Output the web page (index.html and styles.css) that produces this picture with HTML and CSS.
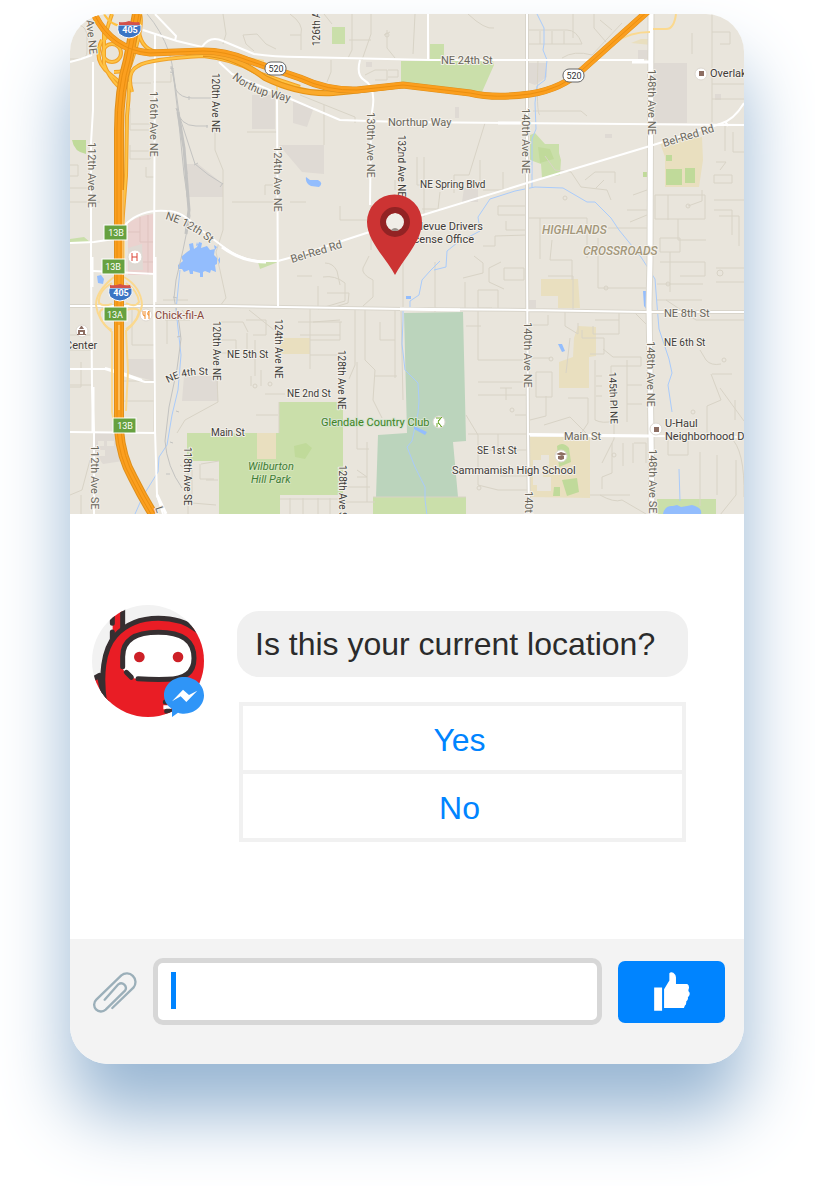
FILE: index.html
```html
<!DOCTYPE html>
<html lang="en">
<head>
<meta charset="utf-8">
<meta name="viewport" content="width=device-width, initial-scale=1">
<title>Location chat</title>
<link rel="stylesheet" href="styles.css">
</head>
<body>
<main class="card">
<svg class="map" viewBox="70 14 674 500" role="img" aria-label="Street map">
  <rect class="land" x="70" y="14" width="674" height="500"/>

  <g class="block">
    <path d="M252 95h23v34h-23zM293 100l21 7-7 20-14-4zM279 145h45v29l-22-2zM186 164h12l25 20v13h-37zM653 63h34v60h-34zM527 63h20v14l-12 8-8-3zM127 359h27v22l-27-7zM184 376h34v25h-36zM95 433h25l3 28-20 3-8-10zM464 188h14v14h-16zM455 107h4v11h-4zM638 50h12v9h-12zM715 94h6v6h-6zM528 300h8v8h-8zM366 62h6v5h-6zM605 134h7v4h-7z"/>
  </g>
  <path class="hospital" d="M128 223q12-8 25-9v61h-25z"/>
  <path class="block" d="M128 248l14-4 1 26h-14z"/>
  <path class="hospital-street" d="M140 217v25h13M148 215v60M128 232h12M143 262h10"/>
  <g class="park">
    <path d="M401 61h92l1 4-12 27-81-10zM430 44h14v15h-14zM332 27h13v17h-13zM70 239l14-2 6 5H70zM258 262h20l-18 7zM530 135l5-2 10 11h14v9l2 7-1 15-18 3-1-14-11-4zM187 433h92v-31h64v93h-63v19h-61v-53h-32zM373 497h93v17h-93zM657 499h59v15h-59z"/>
    <path class="park-dark" d="M72 140h14v14q-12-2-14-14zM538 147l12 2 4 10-14 4zM294 446l12-3 6 5-7 11-10-2zM643 172h4v5h-4z"/>
  </g>
  <g class="school">
    <path d="M660 143l42-6 1 23-4 27h-34v-30zM541 279h37l2 29h-22v-12h-17zM578 326l18 1v29l-7 1v31h-30v-26l14-5 1-19zM530 437h60v61l-60-1zM257 433h19v26h-19zM280 338h30v16h-30zM631 43l10-4h10v6z"/>
  </g>
  <path class="park-dark" d="M666 169h16v16h-16zM685 168h10v15h-10zM666 155h6v6h-6zM557 446q6-5 12 2l2 14-12 5zM562 480l15-2 2 14-12 4zM554 487h6v9h-7z"/>
  <path class="golf" d="M404 313l59-1 3 129-13 1 5 55h-82l2-62 29-2z"/>
  <path class="footprint" d="M533 460h8v-5h8v10h-6v12h8v14h-14v-6h-4zM98 441h6v5h-6zM107 441h7v5h-7zM99 450h6v6h-6z"/>

  <g class="street">
    <path d="M70 59h10q7 0 7-8V37q0-10-8-12M70 176h8v-11H70M70 202h30M70 188h21v16M128 83h23M130 108v22h22M130 145v14h20v-8h-20M131 124h22M146 167v10h8M153 82h18v-8M254 51l-8-7-3-9 14-1 9 10 10 5M223 14l3 20-3 10M215 132v18l8 20v60l-7 22 10 46-6 8M247 132h30M265 195v-10h13M232 202h46"/>
    <path d="M290 14q14 10 11 20v16M301 35h-11M352 14v36l-4 8M371 14v20l-9 26M349 40h22M387 30v18l8 10M384 35l6-3M415 14l-2 40M331 60v12l-4 10M365 75l10-5h12v10h-12M388 70h10v7h-10M324 14l8 10M468 14q17 16 26 14M324 105v40M300 95l55 22v6M485 123l-16 52h-15v18M424 157v60M417 157v28h7M480 160v28M440 192l-2 17h-16M340 206v14h32M290 202h16M503 172v18h-20M527 235l-32 1v10h-12M498 206h30M498 206v9h29M506 221v9h22M474 256l9 7v10l-20 5M501 262l-12 6v14l15 7M504 268h20v12h-20zM478 290h20v18M478 290v18h14M371 205v45M395 180v10"/>
    <path d="M527 30h40q10 0 15 14h-55M540 31v13M552 31v13M564 31v13M538 60q-2 55 2 55M573 14v24M594 14v14l12 14M600 20l12 10M562 58q12-8 30-3l30-32M533 111h48l6 5M712 14v108M712 32h18v12h-10M692 33v21M712 84h32M712 99h32M545 156l10 14 16 2 10 15 26 3 4 10M585 180l10-8h20v11M596 188l8-8M627 210h20M633 195l14-5M630 222l17-7M540 218v41M527 218h60v40M588 228h61M552 240l-2 20h22v20M548 276h25v34M598 238v50h50M655 195h50v24h-50zM668 195v25M678 219v21h28M688 206l14-5v-11M725 125v26M733 132v20h11M716 162h10l-6 8M714 175h18v8h-18zM714 200h30M714 210h18v25M719 216h20v30M660 238h20v14h-20zM660 262h45v14h-25M716 268h28M716 282h28M657 284h46M657 300h45"/>
    <path d="M548 315v10h-20M565 312v14l13 8v-11M595 320h24v14h-26v-8M619 320v-10M634 312l12 12M570 338l-4 35M582 330v8h22v16h-14M536 372h16v25h-16zM550 358h-18M603 349l10 8h28v9h-30v40M595 360v60q8 4 18 1M596 376h6M596 386h6M596 396h6M568 398h20v25l-10 15M544 425l26-8 16 16M530 420l16-4v-20M627 360v62M627 385h15M627 404h15M614 421v18l-12 24M612 443v30l-10 4v12M623 443v23M633 443v20M634 443h12v20M590 495h40M600 495q14 8 22 5l24 14M670 252v40M666 300l30 20h50M700 350l6 10q5 6 15 4M711 374l10 26-14 6v30M712 374h20M720 388l24 33M735 400v20M717 455v40M736 460v35l-16 20M700 452v54M668 440v15h20v-15M730 437q15 12 14 60"/>
    <path d="M327 293h22l-1 10-20 6M318 286v23l27-8v-18q-10-8-22-6M297 276h15M325 263q8 0 12 8l3 14M363 306l10-9V280q-12-6-10-12l6-12M403 262v45M435 262v50M465 282v28M310 309v60M298 322h44M300 335h40M340 322v18h-30M310 355h35M313 322l27-2M365 310v50l10 10-2 30 9 18M395 310v68M380 322v18h15M401 310l2 90M355 310v55l-6 14M375 376h22M357 362v87h12M367 442v60M357 470l10 7h-10M340 502h35M340 487h30M478 360h50M478 382h50M478 360v-50M478 395h50M500 388h12M506 388v12M515 415h13M468 434h60v18M498 434v20M466 415l12 20M478 435v50l20 5h30M482 450h46M528 476h-28M466 326h15M373 497h93"/>
    <path d="M70 335h21M70 350h21M70 385h21M81 362v25h-11M118 381h36v50M118 401h36M132 310v35h22M165 320h25l-8-10M218 340h18v13h-18M218 322h25l5 10M247 333v16M255 340v36M251 376v10M261 370v16M216 352l2 50-33 18-8 13M249 310l30 24M246 320h20v15h-13M265 394h20M279 402v31M256 415h22M192 465v38l24 2M200 464v15h14M206 480h12M70 495l12-5 8-30M81 495v19M180 465l8 6v43M163 300h25M167 314v30M219 461l-18 3M280 499h62M290 498v16M303 498v16M318 498v16M330 498v16"/>
    <circle cx="512" cy="410" r="2"/><circle cx="479" cy="488" r="2"/><circle cx="606" cy="288" r="2"/><circle cx="668" cy="284" r="2"/><circle cx="720" cy="273" r="3"/><circle cx="551" cy="359" r="2"/><circle cx="614" cy="455" r="2"/><circle cx="688" cy="206" r="2"/><circle cx="565" cy="198" r="2"/><circle cx="724" cy="360" r="2"/><circle cx="693" cy="412" r="2"/><circle cx="255" cy="386" r="2"/><circle cx="270" cy="384" r="2"/><circle cx="387" cy="35" r="2"/>
  </g>

  <g class="stream">
    <path d="M537 14l7 14v16l-1 6 4 10-2 20-8 6-2 17 1 26-4 10v48"/>
    <path d="M434 270l12-3 1-16 10-8 23-12-2-14 12-18 25-8 20-4 28 1 24 14h8l16 16 8 12 22 27 14 22 2 26 2 24 10 30 3 14-4 12 4 27"/>
    <path d="M440 261l-10 10-8 9-3 15-9 6v9"/>
    <path d="M403 310v10l-1 24 3 26 13 13 1 18-1 12-6 28-5 6 8 20 10 20v12l3 25"/>
    <path d="M180 270l-4 40 5 45-3 35-6 25-5 30-8 12-1 15-15 24-8 18 4 14M679 469l1 32"/>
  </g>
  <g class="water">
    <path d="M187 252l3-2-1-6 4-1 1 6 3-2 2-5 3 1-1 5 6-2 3 4 5-1-1 6 3 3v6l-2 1 1 7-5-2-1 3-5-2-2 1v5h-3v-4l-7-2v3h-3l-1-4-5 2-2-3h-4v-4l5-4-2-4z"/>
    <path d="M197 242l1 3-2 1zM214 245l3 2-2 3zM218 260l2-3v7zM306 177l4 3h8q6 3 1 7l-8-1q-6-3-5-9zM97 276l4-1 3 4-1 5-5-1zM558 344h4l3 7-3 1zM643 291h4v19l-3-4zM414 426l13 6-2 3-11-6zM406 296h5v3h-5z"/>
    <path d="M663 514q2-9 10-8l4-1 4 2 6-1 5-1q11 3 9 9z"/>
  </g>

  <g class="rail">
    <path d="M147 14q14 16 22 38l3 12 6 50 6 60 6 42-7 34-7 30-2 18 5 25 2 16-4 30-8 38-4 34q2 26 17 47"/>
    <path d="M171 66l5 24q5 8 16 8h26M176 108q4 18 20 18h12M180 118l15 46q12 11 28 20M173 70l10 72 4 32"/>
    <path class="rail-wide" d="M178 112l6 36 5 62-3 24"/>
    <path d="M170 68l4 1M170 72l4 1M189 96v4M207 125v3M194 165l4-2M220 187l3-4M177 298l-4-1M181 336l-4 1M176 411l3 1M170 442l3 1M166 474h4"/>
  </g>

  <g class="road-edge">
    <path d="M70 306h155l178 3 125 1 117 2h99M527 14v246l1 177 1 77"/>
    <path d="M651 14l-1 246-1 45 2 130 1 79" class="avenue-edge"/>
  </g>
  <g class="road">
    <path d="M93 62V110l-2 33v117l1 127 2 45v82M155 35l-1 240 1 155 2 65 6 19M277 97l1 209M360 60q-4 15 4 20 11 6 9 25l-2 15-1 85M428 14v47M143 30l34 11 25 6q8-12 21-6l31 13q20 3 46 3l130 3h214M155 14l21 22-1 5M70 62l11-3 11-4"/>
    <path d="M219 62l13 12 61 26 47 20 60 2 344 3M70 243l24-1 20-3 13-16q15-14 40-12 15 0 30 16l24 18q20 16 40 16h17l22-6 45-15 55-18 127-39 123-37 70-22q14-4 24-21M70 306h155l178 3 125 1 117 2h99M527 14v246l1 177 1 77M93 271l62 3M70 369h35l40 13h10M105 368l15 4 22 8M70 432l85 1M529 434l122 2 93 1M725 121l3 5"/>
    <path class="wide" d="M92 257v30M155 257v45M400 309l60 1M498 123h30M632 62h20M93 387v45M157 495l9 19M530 435l120 1M222 247q20 15 44 15"/>
    <path class="avenue" d="M651 14l-1 246-1 45 2 130 1 79"/>
  </g>

  <g class="ramp-pale">
    <path d="M124 200v75M114 277q-18 14-18 28 2 16 16 27v80l4 20M124 277q17 10 18 28-2 14-16 26l2 40-2 40"/>
    <path d="M112 283q-14 8-13 20 4 4 13 1M126 283q12 8 13 19-4 6-13 1M112 310q-14-4-12 6 3 10 12 14M126 310q16-4 12 5-2 8-12 14"/>
    <path d="M644 14q-35 34-60 53M650 32q-20 0-34 10l-36 30M653 29h13q8 0 10-15M277 82v12M240 57l24 4"/>
  </g>
  <g class="ramp-edge">
    <path d="M104 32v32q4 12 16 24v40M102 40q-10 20 8 34l14 12M140 14q-6 32 16 38M112 14q-8 22-6 26M132 92q-6-20 6-26 10-7 65-10 30 3 52 16l45 15M114 72q12 0 16-6 14-40 10-52M129 82q0 18-2 34l-1 60-4 50"/>
    <circle cx="112" cy="53" r="9"/>
  </g>
  <g class="ramp">
    <path d="M104 32v32q4 12 16 24v40M102 40q-10 20 8 34l14 12M140 14q-6 32 16 38M112 14q-8 22-6 26M132 92q-6-20 6-26 10-7 65-10 30 3 52 16l45 15M114 72q12 0 16-6 14-40 10-52M129 82q0 18-2 34l-1 60-4 50M104 14q8 14 24 12"/>
    <circle cx="112" cy="53" r="9"/>
  </g>
  <path class="branch-edge" d="M203 54q30 0 62 24 35 17 68 15 30-3 70-8"/>
  <path class="branch" d="M203 54q30 0 62 24 35 17 68 15 30-3 70-8"/>
  <g class="freeway-edge">
    <path class="trunk" d="M137 14l-9 46q-9 30-9 70v300q2 27 14 48 10 20 20 36"/>
    <path d="M94 14q18 36 56 39l53-2q22 0 44 9l53 18q28 13 57 12l46-5 67 8q25 6 60 1 32-5 52-24l66-59"/>
  </g>
  <g class="freeway">
    <path class="trunk" d="M137 14l-9 46q-9 30-9 70v300q2 27 14 48 10 20 20 36"/>
    <path d="M94 14q18 36 56 39l53-2q22 0 44 9l53 18q28 13 57 12l46-5 67 8q25 6 60 1 32-5 52-24l66-59"/>
  </g>
  <g class="freeway-line">
    <path d="M135 14l-9 46q-9 30-9 70v300q2 27 14 48 10 20 20 36M139 14l-9 46q-9 30-9 70v300q2 27 14 48 10 20 20 36"/>
    <path d="M94 14q18 36 56 39l53-2q22 0 44 9l53 18q28 13 57 12l46-5 67 8q25 6 60 1 32-5 52-24l66-59"/>
  </g>
  <path class="median" d="M123 190v85M119 325v85"/>

  <g class="exit">
    <rect x="104" y="225" width="23" height="15"/><text x="116" y="236">13B</text>
    <rect x="102" y="259" width="23" height="15"/><text x="113" y="270">13B</text>
    <rect x="104" y="307" width="23" height="14"/><text x="115" y="318">13A</text>
    <rect x="113" y="418" width="23" height="15"/><text x="125" y="429">13B</text>
  </g>
  <g class="interstate">
    <path class="shield" d="M118 25h23q1 6-2 9-5 4-10 4-5 0-10-4-2-4-1-9z"/><path class="crown" d="M119 25v-3q5 1 10-1 5 2 10 1l1 3z"/><text x="130" y="33">405</text>
    <path class="shield" d="M109 288h23q1 6-2 9-5 4-10 4-5 0-10-4-2-4-1-9z"/><path class="crown" d="M110 288v-3q5 1 10-1 5 2 10 1l1 3z"/><text x="121" y="296">405</text>
  </g>
  <g class="state-route">
    <rect x="265" y="62" width="21" height="13" rx="6"/><text x="276" y="72">520</text>
    <rect x="563" y="69" width="21" height="13" rx="6"/><text x="574" y="79">520</text>
  </g>

  <defs>
    <path id="northup" d="M232 78Q252 96 292 102"/>
    <path id="twelfth" d="M165 219Q190 226 216 248"/>
    <path id="fourth" d="M168 383Q185 373 213 375"/>
  </defs>
  <g class="label major">
    <text transform="translate(86 20) rotate(84)">Ave NE</text>
    <text transform="translate(88 142) rotate(90)">112th Ave NE</text>
    <text transform="translate(150 91) rotate(90)">116th Ave NE</text>
    <text transform="translate(274 146) rotate(90)">124th Ave NE</text>
    <text transform="translate(367 112) rotate(90)">130th Ave NE</text>
    <text transform="translate(522 108) rotate(90)">140th Ave NE</text>
    <text transform="translate(648 69) rotate(90)">148th Ave NE</text>
    <text transform="translate(524 322) rotate(90)">140th Ave NE</text>
    <text transform="translate(647 341) rotate(90)">148th Ave NE</text>
    <text transform="translate(91 445) rotate(90)">112th Ave SE</text>
    <text transform="translate(649 449) rotate(90)">148th Ave SE</text>
    <text transform="translate(525 491) rotate(90)">140th</text>
    <text transform="translate(155 508) rotate(70)">L</text>
    <text x="441" y="64">NE 24th St</text>
    <text x="388" y="126">Northup Way</text>
    <text x="664" y="317">NE 8th St</text>
    <text x="564" y="440">Main St</text>
    <text transform="translate(292 263) rotate(-17)">Bel-Red Rd</text>
    <text transform="translate(664 147) rotate(-17)">Bel-Red Rd</text>
    <text><textPath href="#northup">Northup Way</textPath></text>
    <text><textPath href="#twelfth">NE 12th St</textPath></text>
  </g>
  <g class="label minor">
    <text transform="translate(212 73) rotate(90)">120th Ave NE</text>
    <text transform="translate(320 46) rotate(-90)">126th A</text>
    <text transform="translate(398 135) rotate(90)">132nd Ave NE</text>
    <text transform="translate(213 321) rotate(90)">120th Ave NE</text>
    <text transform="translate(275 319) rotate(90)">124th Ave NE</text>
    <text transform="translate(338 350) rotate(90)">128th Ave NE</text>
    <text transform="translate(609 372) rotate(88)">145th Pl NE</text>
    <text transform="translate(184 447) rotate(90)">118th Ave SE</text>
    <text transform="translate(339 465) rotate(90)">128th Ave S</text>
    <text x="420" y="188">NE Spring Blvd</text>
    <text x="227" y="358">NE 5th St</text>
    <text x="287" y="397">NE 2nd St</text>
    <text x="211" y="436">Main St</text>
    <text x="664" y="346">NE 6th St</text>
    <text x="477" y="454">SE 1st St</text>
    <text><textPath href="#fourth">NE 4th St</textPath></text>
  </g>
  <g class="label district">
    <text x="542" y="234">HIGHLANDS</text>
    <text x="583" y="255">CROSSROADS</text>
  </g>
  <g class="label place">
    <text x="710" y="77">Overlak</text>
    <text x="405" y="230">Bellevue Drivers</text>
    <text x="405" y="243">License Office</text>
    <text x="65" y="349">Center</text>
    <text x="665" y="427">U-Haul</text>
    <text x="665" y="440">Neighborhood D</text>
    <text x="452" y="474">Sammamish High School</text>
    <text class="food" x="155" y="319">Chick-fil-A</text>
    <text class="club" x="321" y="426">Glendale Country Club</text>
    <text class="wood" x="248" y="470">Wilburton</text>
    <text class="wood" x="251" y="483">Hill Park</text>
  </g>

  <g class="poi">
    <circle cx="701" cy="74" r="6"/><circle cx="656" cy="429" r="6"/><circle cx="82" cy="331" r="6"/><circle cx="135" cy="257" r="7"/><circle cx="146" cy="315" r="6"/><circle cx="439" cy="422" r="6"/><circle cx="561" cy="456" r="6"/>
  </g>
  <path class="poi-brown" d="M699 71h5v5h-5zM654 427h5v5h-5zM77 335v-1h9v1zM78 330h7v4h-2v-2h-3v2h-2zM79 329l2-3h1l2 3zM556 454l5-2 6 2-5 2zM558 456h6v3l-3 1-3-1z"/>
  <path class="hospital-h" d="M132 253v8M137 253v8M132 257h5"/>
  <path class="fork" d="M143 311v3q0 2 2 2v3M145 311v5M149 311v8M149 311q-2 2-1 4h1"/>
  <path class="golfer" d="M436 418h5l-3 4 3 4v1M442 417l-4 4M437 427v-4M438 423l4 4"/>

  <circle class="pin-glass" cx="395" cy="223" r="10"/>
  <path class="pin" fill-rule="evenodd" d="M395 275C386 258 367 241 367 222a27.500 27.500 0 0 1 55 0c0 19-18 36-27 53zM395 213a10 10 0 1 0 1 0z"/>
  <circle class="pin-ring" cx="395" cy="222" r="12"/>
  <path class="pin-notch" d="M391 230q4-4 8 0-4 2-8 0z"/>
</svg>

<section class="chat">
  <svg class="avatar" viewBox="36 45 336 336" aria-hidden="true">
    <defs><clipPath id="face"><circle cx="204" cy="213" r="168"/></clipPath></defs>
    <g clip-path="url(#face)">
      <rect class="bot-bg" x="36" y="45" width="336" height="336"/>
      <path class="bot-red" d="M98 50h30v110H98z"/>
      <path class="bot-line" d="M128 48v86M97 60v40M97 126v30"/>
      <path class="bot-red bot-line" d="M34 270l24-14 12 60 16 30"/>
      <path class="bot-red" d="M76 335C62 260 68 180 106 138 140 100 185 85 235 85c45 0 85 12 115 35l40 60v220H90z"/>
      <path class="bot-line" d="M74 340C62 260 68 180 106 138 140 100 185 85 235 85c45 0 85 12 115 35l30 30"/>
      <path class="visor" d="M128 232v-32C128 150 165 127 235 127S342 150 342 205C342 252 325 268 285 268H175C155 266 130 250 128 232z"/>
      <path class="bot-line" d="M128 230v-30C128 150 165 127 235 127S342 150 342 205C342 252 310 268 262 268 230 269 200 268 174 266M139 247l15 15"/>
      <circle class="eye" cx="178" cy="201" r="16"/><circle class="eye" cx="294" cy="201" r="16"/>
      <path class="bot-white" d="M250 346h24v12h-24z"/>
      <path class="bot-line" d="M256 336h6M260 364h10"/>
    </g>
    <path class="messenger" d="M312 261c33 0 60 24 60 55s-27 55-60 55c-6 0-13-1-18-3l-18 13v-24c-15-10-24-24-24-41 0-31 27-55 60-55z"/>
    <path class="bot-white" d="M276 334l33-35 18 16 25-13-33 34-17-17z"/>
  </svg>
  <div class="message">
    <p class="bubble">Is this your current location?</p>
    <div class="answers">
      <button type="button">Yes</button>
      <button type="button">No</button>
    </div>
  </div>
</section>

<form class="composer">
  <button class="attach" type="button" aria-label="Attach">
    <svg viewBox="38 123 132 126" aria-hidden="true"><path d="M96 234L160 172A26 26 0 0 0 123 136L48 209A20 20 0 0 0 76 239L134 182A14 14 0 0 0 114 163L73 209"/></svg>
  </button>
  <div class="field">
    <input type="text" aria-label="Message">
    <span class="caret"></span>
  </div>
  <button class="like" type="button" aria-label="Like">
    <svg viewBox="0 0 108 118" aria-hidden="true"><path d="M0 47h24v70H0zM30 52l16-26V4q4-6 12-2 8 6 8 14v20h34q7 4 5 14-2 5-1 8 5 3 3 11-1 5-5 7 2 9-5 13 1 10-4 12l-3 8H30z"/></svg>
  </button>
</form>
</main>
</body>
</html>
```
FILE: styles.css
```css
* { box-sizing: border-box; }

body {
  margin: 0;
  padding: 14px 71px 122px 70px;
  background: #fff;
  font-family: "Liberation Sans", Arial, sans-serif;
}

.card {
  overflow: hidden;
  border-radius: 38px;
  background: #fff;
  box-shadow: 0 50px 70px #98b6d3;
}

button { font: inherit; cursor: pointer; }

/* Map */
.map { display: block; width: 100%; height: auto; font-family: Roboto, sans-serif; }
.land { fill: #e9e5dc; }
.block { fill: #dfdad4; }
.hospital { fill: #ebd2cf; }
.hospital-street { fill: none; stroke: #dfc3bf; stroke-width: 1; }
.park { fill: #cadfaa; }
.park-dark { fill: #c0da9a; }
.school { fill: #e9dfbf; }
.golf { fill: #bbd4bc; }
.footprint { fill: #e9e5dc; }
.street { fill: none; stroke: #d8d3c6; stroke-width: 1; }
.stream { fill: none; stroke: #a9cbfb; stroke-width: 1; }
.water { fill: #93bdfd; }
.rail { fill: none; stroke: #c3c3c1; stroke-width: 1; }
.rail-wide { stroke-width: 3; }
.road-edge { fill: none; stroke: #d9d5cb; stroke-width: 4; }
.avenue-edge { stroke-width: 7; }
.road { fill: none; stroke: #fff; stroke-width: 2; stroke-linejoin: round; }
.wide { stroke-width: 3; }
.avenue { stroke-width: 5; }
.ramp-pale { fill: none; stroke: #fbd98f; stroke-width: 2; }
.ramp-edge { fill: none; stroke: #f0a22a; stroke-width: 4; }
.ramp { fill: none; stroke: #ffc242; stroke-width: 2; }
.branch-edge { fill: none; stroke: #e59317; stroke-width: 6; }
.branch { fill: none; stroke: #fbaa2c; stroke-width: 4; }
.freeway-edge { fill: none; stroke: #dd8f1c; stroke-width: 7; }
.freeway-edge .trunk { stroke-width: 10; }
.freeway { fill: none; stroke: #fb9f1f; stroke-width: 6; }
.freeway .trunk { stroke-width: 8; }
.freeway-line { fill: none; stroke: #ea8f10; stroke-width: 1; }
.median { fill: none; stroke: #ffe0a0; stroke-width: 1; }

.exit rect { fill: #67a140; stroke: #fff; stroke-width: 1; }
.exit text { fill: #fff; font-size: 9px; text-anchor: middle; }
.shield { fill: #3b75c4; stroke: #fff; stroke-width: 1; }
.crown { fill: #d3524b; }
.interstate text { fill: #fff; font-size: 9px; font-weight: 700; text-anchor: middle; }
.state-route rect { fill: #fff; stroke: #666; stroke-width: 1; }
.state-route text { fill: #333; font-size: 9px; text-anchor: middle; }

.label { font-size: 11px; stroke: #f3f0ea; stroke-width: 2px; stroke-linejoin: round; paint-order: stroke; }
.major { fill: #69665b; }
.minor { fill: #3e3c38; font-size: 10px; }
.district { fill: #a3977a; font-size: 12px; font-weight: 500; font-style: italic; }
.place { fill: #3f3b39; }
.food { fill: #88473b; }
.club { fill: #3f8426; stroke: #d5e3d0; }
.wood { fill: #3f7d35; stroke: #d6e5bf; font-style: italic; }

.poi { fill: #fff; stroke: #ddd8d0; stroke-width: 1; }
.poi-brown { fill: #8d6e63; }
.hospital-h { fill: none; stroke: #db4437; stroke-width: 1; }
.fork { fill: none; stroke: #ef8a24; stroke-width: 1; }
.golfer { fill: none; stroke: #70aa2f; stroke-width: 1; }
.pin { fill: #cc3333; }
.pin-glass { fill: #f0ede7; }
.pin-ring { fill: none; stroke: #922324; stroke-width: 6; }
.pin-notch { fill: #98908a; }

/* Conversation */
.chat {
  display: flex;
  align-items: flex-start;
  gap: 33px;
  padding: 91px 56px 97px 22px;
}
.avatar { flex: none; width: 112px; height: 112px; }
.bot-bg { fill: #f2f2f2; }
.bot-red { fill: #e91d25; }
.bot-line { stroke: #362f31; stroke-width: 15; stroke-linecap: round; stroke-linejoin: round; }
.bot-line:not(.bot-red) { fill: none; }
.visor, .bot-white { fill: #fff; }
.eye { fill: #cd2027; }
.messenger { fill: #2f95f7; }

.message { flex: 1; min-width: 0; padding-top: 6px; }
.bubble {
  margin: 0;
  padding: 14px 18px;
  border-radius: 22px;
  background: #f0f0f0;
  color: #2b2b2b;
  font-size: 32px;
  line-height: 38px;
}
.answers {
  display: grid;
  gap: 4px;
  margin: 25px 2px 0;
  padding: 4px;
  background: #f1f1f1;
}
.answers button {
  height: 64px;
  padding: 4px 6px 0 0;
  border: 0;
  background: #fff;
  color: #0084ff;
  font-size: 32px;
}

/* Composer */
.composer {
  display: flex;
  align-items: center;
  gap: 16px;
  padding: 19px 19px 39px 23px;
  background: #f3f3f3;
}
.attach { flex: none; width: 44px; padding: 0; border: 0; background: none; }
.attach svg { display: block; width: 44px; height: 42px; }
.attach path { fill: none; stroke: #9bafb9; stroke-width: 7; stroke-linecap: round; stroke-linejoin: round; }
.field { position: relative; flex: 1; min-width: 0; }
.field input {
  display: block;
  width: 100%;
  height: 67px;
  padding: 0 14px;
  border: 5px solid #d7d7d7;
  border-radius: 10px;
  background: #fff;
  font: inherit;
  font-size: 32px;
  caret-color: #0084ff;
  outline: 0;
}
.caret {
  position: absolute;
  top: 14px;
  left: 18px;
  width: 5px;
  height: 37px;
  background: #0084ff;
}
.like {
  display: grid;
  flex: none;
  place-items: center;
  width: 107px;
  height: 62px;
  padding: 0;
  border: 0;
  border-radius: 7px;
  background: #0084ff;
}
.like svg { width: 36px; height: 39px; fill: #fff; }
```
